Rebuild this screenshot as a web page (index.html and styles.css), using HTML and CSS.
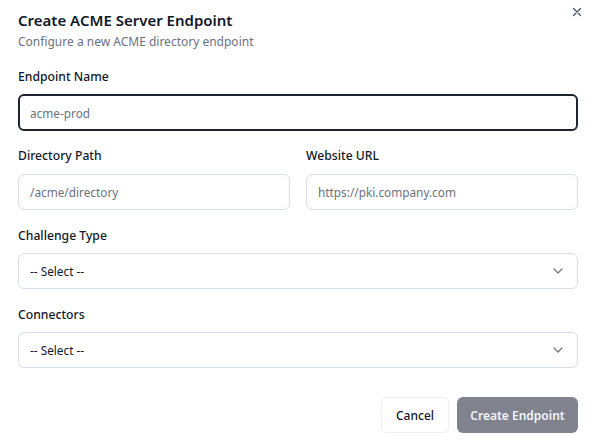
FILE: index.html
```html
<!DOCTYPE html>
<html>
<head>
<meta charset="utf-8">
<link rel="stylesheet" href="styles.css">
</head>
<body>
<div class="dialog">
  <button class="close" aria-label="Close">
    <svg width="10" height="10" viewBox="0 0 10 10"><path d="M1.5 1.5L8.5 8.5M8.5 1.5L1.5 8.5" stroke="#4b5563" stroke-width="1.3" stroke-linecap="round"/></svg>
  </button>
  <div class="header">
    <h2 class="title">Create ACME Server Endpoint</h2>
    <p class="subtitle">Configure a new ACME directory endpoint</p>
  </div>
  <div class="field first">
    <label class="label">Endpoint Name</label>
    <div class="input focus">acme-prod</div>
  </div>
  <div class="row">
    <div class="field">
      <label class="label">Directory Path</label>
      <div class="input">/acme/directory</div>
    </div>
    <div class="field">
      <label class="label">Website URL</label>
      <div class="input">https://pki.company.com</div>
    </div>
  </div>
  <div class="field">
    <label class="label">Challenge Type</label>
    <div class="input select"><span>-- Select --</span>
      <svg width="10" height="6" viewBox="0 0 10 6"><path d="M1 1l4 4 4-4" fill="none" stroke="#6b7280" stroke-width="1.2" stroke-linecap="round" stroke-linejoin="round"/></svg>
    </div>
  </div>
  <div class="field last">
    <label class="label">Connectors</label>
    <div class="input select"><span>-- Select --</span>
      <svg width="10" height="6" viewBox="0 0 10 6"><path d="M1 1l4 4 4-4" fill="none" stroke="#6b7280" stroke-width="1.2" stroke-linecap="round" stroke-linejoin="round"/></svg>
    </div>
  </div>
  <div class="footer">
    <button class="btn cancel">Cancel</button>
    <button class="btn primary">Create Endpoint</button>
  </div>
</div>
</body>
</html>
```
FILE: styles.css
```css
* { box-sizing: border-box; }
html, body { margin: 0; padding: 0; background: #fff; }
body { font-family: "Noto Sans", "Open Sans", sans-serif; color: #111827; }
.dialog { position: relative; width: 596px; height: 448px; padding: 10px 18px 0 18px; }
.close { position: absolute; top: 7px; right: 14px; background: none; border: 0; padding: 0; width: 10px; height: 10px; display: flex; }
.header { margin-bottom: 19px; }
.title { margin: 0; font-size: 15px; font-weight: 600; line-height: 21px; color: #111827; }
.subtitle { margin: 3px 0 0; font-size: 12px; line-height: 16px; color: #6b7280; }
.field { display: flex; flex-direction: column; margin-bottom: 18px; }
.field.first { margin-bottom: 17px; }
.field.last { margin-bottom: 0; }
.label { font-size: 12.2px; font-weight: 500; line-height: 16px; margin-bottom: 9px; color: #111827; }
.input { height: 36px; border: 1px solid #d9dee8; border-radius: 6px; padding: 0 11px; display: flex; align-items: center; font-size: 11.8px; color: #6b7280; }
.input.focus { height: 37px; border: 2px solid #1f2430; padding-left: 10px; }
.row { display: grid; grid-template-columns: 1fr 1fr; column-gap: 16px; }
.row .label { margin-bottom: 10px; }
.row .field { margin-bottom: 18px; }
.select { justify-content: space-between; color: #111827; padding-right: 14px; }
.footer { display: flex; justify-content: flex-end; gap: 8px; margin-top: 29px; }
.btn { height: 36px; border-radius: 6px; font-family: inherit; font-size: 12px; font-weight: 500; padding: 0; white-space: nowrap; }
.cancel { background: #fff; border: 1px solid #eef0f3; color: #111827; width: 68px; }
.primary { background: #80838e; border: 0; color: #f3f4f6; width: 121px; font-weight: 600; }
```
